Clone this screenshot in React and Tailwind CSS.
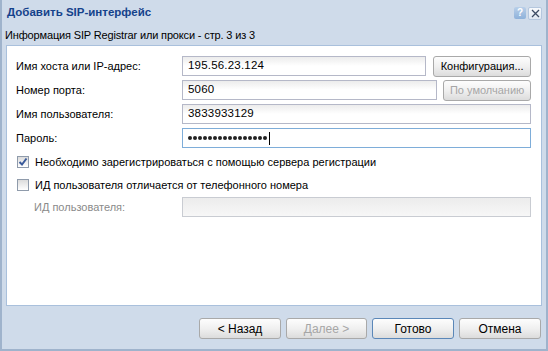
import React from 'react';

const font = { fontFamily: '"Liberation Sans", Arial, sans-serif' };

const Field = ({ value, className = '', focused, disabled }) => (
    <div
        className={
            'h-[20px] flex items-center pl-[5px] text-[11.5px] tracking-[0.2px] text-black border ' +
            (focused
                ? 'border-[#7eadd9] bg-white '
                : disabled
                ? 'border-[#c9ccd2] bg-gradient-to-b from-[#ececec] to-[#f7f7f7] '
                : 'border-[#b5b8c8] bg-gradient-to-b from-[#ececec] via-white to-white ') +
            className
        }
    >
        {value}
    </div>
);

const Btn = ({ children, className = '', disabled, primary }) => (
    <div
        className={
            'h-[21px] flex items-center justify-center whitespace-nowrap rounded-[3px] border bg-gradient-to-b from-[#fdfdfd] via-[#f0f0f0] to-[#dcdcdc] ' +
            (primary ? 'border-[#5b87b8] ' : 'border-[#a9a9a9] ') +
            (disabled ? 'text-[#a6a6a6] ' : 'text-black ') +
            className
        }
    >
        {children}
    </div>
);

const Check = ({ checked }) => (
    <div className="w-[12px] h-[12px] border border-[#8f9bab] bg-gradient-to-b from-[#dcdcdc] to-white flex items-center justify-center">
        {checked && (
            <svg width="10" height="10" viewBox="0 0 10 10">
                <path d="M1.5 5 L4 7.5 L8.5 1.5" stroke="#3a5a9a" strokeWidth="2" fill="none" />
            </svg>
        )}
    </div>
);

const Row = ({ label, children, className = '', labelClass = 'text-black' }) => (
    <div className={'flex items-center h-[20px] ' + className}>
        <div className={'w-[166px] shrink-0 text-[11px] ' + labelClass}>{label}</div>
        {children}
    </div>
);

const Dots = ({ count }) => (
    <span className="flex items-center gap-[1px]">
        {Array.from({ length: count }).map((_, i) => (
            <span key={i} className="w-[4px] h-[4px] rounded-full bg-[#222]" />
        ))}
        <span className="ml-[1px] w-[1px] h-[13px] bg-black" />
    </span>
);

export default function App() {
    return (
        <div style={font} className="w-[548px] h-[351px] bg-[#cfdbea] border-x-2 border-b-2 border-[#9fb3cc] flex flex-col overflow-hidden">
            {/* Header */}
            <div className="h-[26px] flex items-center justify-between pl-[5px] pr-[4px] shrink-0">
                <span className="text-[11.5px] font-bold text-[#15428b]">Добавить SIP-интерфейс</span>
                <div className="flex gap-[2px]">
                    <div className="w-[12px] h-[12px] rounded-[2px] bg-gradient-to-b from-[#b9cfe9] to-[#8eb1da] flex items-center justify-center text-[10px] font-bold text-white leading-none">
                        ?
                    </div>
                    <div className="w-[14px] h-[13px] rounded-[2px] bg-gradient-to-b from-[#f7f9fc] to-[#dfe7f2] border border-[#b5c7de] flex items-center justify-center">
                        <svg width="9" height="9" viewBox="0 0 9 9">
                            <path d="M1 1 L8 8 M8 1 L1 8" stroke="#3b4a63" strokeWidth="1.3" />
                        </svg>
                    </div>
                </div>
            </div>
            <div className="h-[18px] flex items-center px-[3px] text-[11px] tracking-[-0.15px] text-black shrink-0">
                Информация SIP Registrar или прокси - стр. 3 из 3
            </div>

            {/* Panel */}
            <div className="mx-[4px] mt-[1px] h-[261px] bg-white border border-[#a9c0dc] shrink-0 pl-[9px] pr-[10px] pt-[10px]">
                <Row label="Имя хоста или IP-адрес:">
                    <Field value="195.56.23.124" className="w-[245px]" />
                    <Btn className="ml-[7px] w-[98px] text-[11px]">Конфигурация...</Btn>
                </Row>
                <Row label="Номер порта:" className="mt-[4px]">
                    <Field value="5060" className="w-[256px]" />
                    <Btn disabled className="ml-[6px] w-[88px] text-[11px]">По умолчанию</Btn>
                </Row>
                <Row label="Имя пользователя:" className="mt-[4px]">
                    <Field value="3833933129" className="w-[350px]" />
                </Row>
                <Row label="Пароль:" className="mt-[4px]">
                    <Field focused value={<Dots count={16} />} className="w-[350px]" />
                </Row>
                <div className="flex items-center gap-[6px] mt-[5px] h-[18px] pl-[1px]">
                    <Check checked />
                    <span className="text-[11px] text-black">Необходимо зарегистрироваться с помощью сервера регистрации</span>
                </div>
                <div className="flex items-center gap-[6px] mt-[5px] h-[18px] pl-[1px]">
                    <Check />
                    <span className="text-[11px] text-black">ИД пользователя отличается от телефонного номера</span>
                </div>
                <Row label={<span className="pl-[18px]">ИД пользователя:</span>} labelClass="text-[#8a8a8a]" className="mt-[3px]">
                    <Field disabled value="" className="w-[350px]" />
                </Row>
            </div>

            {/* Footer */}
            <div className="flex justify-end gap-[5px] pr-[5px] pt-[12px]">
                <Btn className="w-[82px] text-[12px]">&lt; Назад</Btn>
                <Btn disabled className="w-[81px] text-[12px]">Далее &gt;</Btn>
                <Btn primary className="w-[82px] text-[12px]">Готово</Btn>
                <Btn className="w-[82px] text-[12px]">Отмена</Btn>
            </div>
        </div>
    );
}
